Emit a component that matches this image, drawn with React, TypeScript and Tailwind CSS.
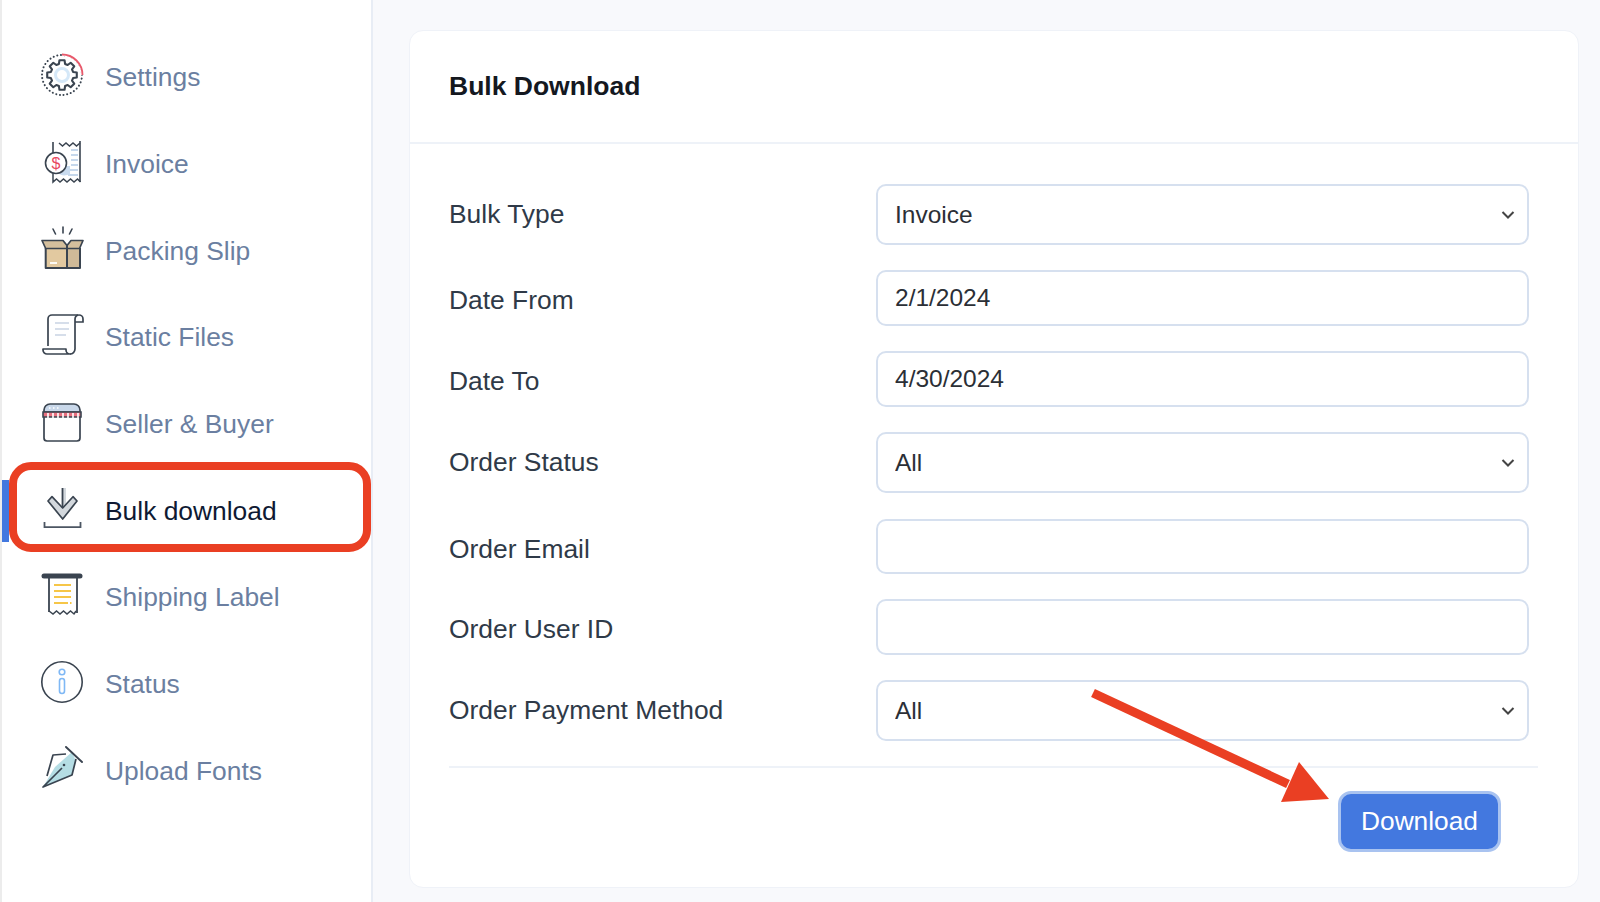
import React from "react";

const DARK = "#3a4450";

// gear outline, 8 teeth
const gearPath = (cx: number, cy: number, outer: number, inner: number) => {
  const pts: string[] = [];
  for (let i = 0; i < 8; i++) {
    const a = (i * Math.PI) / 4 - Math.PI / 2;
    const offs: [number, number][] = [
      [-0.27, inner],
      [-0.17, outer],
      [0.17, outer],
      [0.27, inner],
    ];
    offs.forEach(([d, r]) => {
      pts.push(`${(cx + r * Math.cos(a + d)).toFixed(2)} ${(cy + r * Math.sin(a + d)).toFixed(2)}`);
    });
  }
  return `M${pts.join("L")}Z`;
};

const SettingsIcon = () => (
  <svg width="44" height="44" viewBox="0 0 44 44" fill="none">
    <circle cx="22" cy="22" r="20" stroke={DARK} strokeWidth="2" strokeDasharray="0.1 3.6" strokeLinecap="round" />
    <circle cx="22" cy="22" r="20.5" stroke="#fff" strokeWidth="3" strokeDasharray="32.2 128.8" transform="rotate(-90 22 22)" />
    <path d="M22 1.5A20.5 20.5 0 0 1 42.5 22" stroke="#e8596b" strokeWidth="1.8" fill="none" />
    <path d={gearPath(22, 22, 15, 11.5)} stroke={DARK} strokeWidth="2.1" fill="#fff" strokeLinejoin="round" />
    <circle cx="22" cy="22" r="6.5" fill="#fff" stroke="#d5e8f8" strokeWidth="3" />
  </svg>
);

const InvoiceIcon = () => (
  <svg width="44" height="44" viewBox="0 0 44 44" fill="none">
    <path d="M31 10h7M31 15h7M31 20h7M31 25h7M26 30h12M28 35h10" stroke="#b4cbe6" strokeWidth="1.3" />
    <path d="M18 33c3 3 8 3 12 1v-8H18z" fill="#c9dbef" />
    <path d="M13 13V2M40 1v41" stroke={DARK} strokeWidth="1.6" />
    <path d="M19 3l3.5 3 3.5-3 3.5 3 3.5-3 3.5 3 3.5-3" stroke={DARK} strokeWidth="1.5" />
    <path d="M13 32v10l3.5-3 3.5 3 3.5-3 3.5 3 3.5-3 3.5 3 3.5-3 3 3" stroke={DARK} strokeWidth="1.5" />
    <circle cx="16" cy="23" r="10.5" fill="#fff" stroke={DARK} strokeWidth="1.6" />
    <text x="16" y="29" textAnchor="middle" fontFamily="'Liberation Sans', sans-serif" fontSize="16" fill="#e8485f">$</text>
  </svg>
);

const BoxIcon = () => (
  <svg width="44" height="44" viewBox="0 0 44 44" fill="none">
    <path d="M23 1v6M13 3l2.500 5M32 3l-2.500 5" stroke={DARK} strokeWidth="1.6" strokeLinecap="round" />
    <path d="M6 20h21v22H6z" fill="#e2c9a0" />
    <path d="M27 20h13v22H27z" fill="#cfba98" />
    <path d="M2 14.500H23l4 5 4-5h12l-3.500 8H5.700z" fill="#d4bf9d" stroke={DARK} strokeWidth="1.7" strokeLinejoin="round" />
    <path d="M5.700 22v20H40V22M27 19v23" stroke={DARK} strokeWidth="2" strokeLinejoin="round" />
    <path d="M10 37h7" stroke="#fff" strokeWidth="1.8" />
  </svg>
);

const FilesIcon = () => (
  <svg width="44" height="44" viewBox="0 0 44 44" fill="none">
    <path d="M8 33V6a4 4 0 0 1 4-4h26" stroke={DARK} strokeWidth="1.7" />
    <path d="M35 6a4 4 0 0 1 8 0v3h-8" stroke={DARK} strokeWidth="1.7" />
    <path d="M35 6v30a5 5 0 0 1-5 5" stroke={DARK} strokeWidth="1.7" />
    <path d="M3 36h23v1a4 4 0 0 0 4 4H7a4 4 0 0 1-4-4z" fill="#fff" stroke={DARK} strokeWidth="1.7" strokeLinejoin="round" />
    <path d="M15 10h14M15 16h14M15 22h11" stroke="#c9d4e3" strokeWidth="1.5" />
  </svg>
);

const SellerIcon = () => (
  <svg width="44" height="44" viewBox="0 0 44 44" fill="none">
    <path d="M4 16v22a3 3 0 0 0 3 3h30a3 3 0 0 0 3-3V16" stroke={DARK} strokeWidth="1.7" />
    <path d="M4 10a6 6 0 0 1 6-6h24a6 6 0 0 1 6 6v2H4z" fill="#c9d8ea" stroke={DARK} strokeWidth="1.7" />
    <path d="M3 12h38v5H3z" fill="#e8707f" stroke={DARK} strokeWidth="1.6" />
    <path d="M8 13v5M13 13v5M18 13v5M23 13v5M28 13v5M33 13v5M38 13v5" stroke="#fff" strokeWidth="1.6" />
    <path d="M9 8h1.5M13 8h1.5M17 8h1.5" stroke="#fff" strokeWidth="1.4" />
  </svg>
);

const DownloadIcon = () => (
  <svg width="44" height="44" viewBox="0 0 44 44" fill="none">
    <path d="M23 2h3v20h-3z" fill="#d3d8dd" />
    <path d="M8 15l4-4.300L22.700 22 33 10.700l4 4.300-14.300 18z" fill="#d3d8dd" stroke={DARK} strokeWidth="1.700" strokeLinejoin="round" />
    <path d="M22.500 2v20" stroke={DARK} strokeWidth="1.800" />
    <path d="M4.500 36v5.200h36V36" stroke="#4c5663" strokeWidth="1.800" />
  </svg>
);

const ShippingIcon = () => (
  <svg width="44" height="44" viewBox="0 0 44 44" fill="none">
    <path d="M9 3v36M37 3v37" stroke={DARK} strokeWidth="1.8" />
    <path d="M4 3h36" stroke={DARK} strokeWidth="5" strokeLinecap="round" />
    <path d="M14 12h17M14 18h17M14 24h17M14 30h14M30 30h1.500" stroke="#f6c648" strokeWidth="1.9" />
    <path d="M9 38l4 3 3.500-3 3.500 3 3.500-3 3.500 3 3.500-3 3.500 3 2-3" stroke={DARK} strokeWidth="1.5" />
  </svg>
);

const StatusIcon = () => (
  <svg width="44" height="44" viewBox="0 0 44 44" fill="none">
    <circle cx="22" cy="22" r="20.200" stroke={DARK} strokeWidth="1.6" />
    <circle cx="22" cy="12" r="2.800" stroke="#7fb8f5" strokeWidth="1.6" />
    <rect x="19.500" y="18.500" width="5" height="15" rx="2.500" stroke="#7fb8f5" strokeWidth="1.6" />
  </svg>
);

const PenIcon = () => (
  <svg width="44" height="44" viewBox="0 0 44 44" fill="none">
    <path d="M3 41l12-20 17-15 4 9-4 14z" fill="#b5dde4" />
    <path d="M7 30L13 9l13-1" stroke={DARK} strokeWidth="1.7" strokeLinejoin="round" />
    <path d="M26 1l16 15" stroke={DARK} strokeWidth="1.900" strokeLinecap="round" />
    <path d="M36 13l-4 16-29 12 19-19" stroke={DARK} strokeWidth="1.7" strokeLinejoin="round" />
    <circle cx="24" cy="19" r="1.300" fill={DARK} />
  </svg>
);

const navItems = [
  { label: "Settings", icon: <SettingsIcon /> },
  { label: "Invoice", icon: <InvoiceIcon /> },
  { label: "Packing Slip", icon: <BoxIcon /> },
  { label: "Static Files", icon: <FilesIcon /> },
  { label: "Seller & Buyer", icon: <SellerIcon /> },
  { label: "Bulk download", icon: <DownloadIcon />, active: true },
  { label: "Shipping Label", icon: <ShippingIcon /> },
  { label: "Status", icon: <StatusIcon /> },
  { label: "Upload Fonts", icon: <PenIcon /> },
];

const Label = ({ children }: { children: React.ReactNode }) => (
  <label className="h-[55px] w-[427px] shrink-0 text-[26.4px] leading-[60px] text-[#2f3a48]">{children}</label>
);

const SelectRow = ({ label, value, options }: { label: string; value: string; options: string[] }) => (
  <div className="flex items-start">
    <Label>{label}</Label>
    <div className="relative w-[653px]">
      <select
        defaultValue={value}
        className="h-[61px] w-full appearance-none rounded-[10px] border-2 border-[#d6e0ef] bg-white pl-[17px] pt-[2px] text-[24.5px] text-[#2b2f36] outline-none"
      >
        {options.map((o) => (
          <option key={o}>{o}</option>
        ))}
      </select>
      <svg className="absolute right-[14px] top-[26px]" width="14" height="10" viewBox="0 0 14 10" fill="none">
        <path d="M1.500 2l5.500 5.500L12.500 2" stroke="#444" strokeWidth="2" />
      </svg>
    </div>
  </div>
);

const InputRow = ({ label, value }: { label: string; value?: string }) => (
  <div className="flex items-start">
    <Label>{label}</Label>
    <input
      type="text"
      defaultValue={value}
      className="h-[55.5px] w-[653px] rounded-[10px] border-2 border-[#d6e0ef] bg-white pb-[1px] pl-[17px] text-[24.5px] text-[#2b2f36] outline-none"
    />
  </div>
);

export default function App() {
  return (
    <div className="relative flex h-[902px] w-[1600px] overflow-hidden bg-[#f8f9fc] font-['Liberation_Sans',Arial,sans-serif]">
      {/* Sidebar */}
      <aside className="h-full w-[373px] shrink-0 border-r-2 border-l-2 border-r-[#e8edf5] border-l-[#ececec] bg-white pt-[34.6px]">
        {navItems.map((item) => (
          <div key={item.label} className="relative flex h-[86.7px] items-center pl-[38px]">
            {item.active && <div className="absolute left-0 top-[12px] h-[62px] w-[7px] bg-[#4378df]" />}
            <span className="-mt-[6px] shrink-0">{item.icon}</span>
            <span className={`ml-[21px] text-[26.4px] ${item.active ? "text-[#0f1a33]" : "text-[#6b7fa1]"}`}>{item.label}</span>
          </div>
        ))}
      </aside>

      {/* Main */}
      <main className="flex-1 pl-[36px] pt-[30px]">
        <div className="h-[858px] w-[1170px] rounded-[14px] border border-[#eff2f8] bg-white">
          <div className="flex h-[113px] items-center border-b-2 border-[#eef2f8] px-[39px]">
            <h1 className="text-[26.5px] font-bold text-[#14181f]">Bulk Download</h1>
          </div>
          <div className="pl-[39px] pr-[40px] pt-[40px]">
            <div className="flex flex-col gap-[25.4px]">
              <SelectRow label="Bulk Type" value="Invoice" options={["Invoice", "Packing Slip"]} />
              <InputRow label="Date From" value="2/1/2024" />
              <InputRow label="Date To" value="4/30/2024" />
              <SelectRow label="Order Status" value="All" options={["All"]} />
              <InputRow label="Order Email" />
              <InputRow label="Order User ID" />
              <SelectRow label="Order Payment Method" value="All" options={["All"]} />
            </div>
            <div className="mt-[25px] border-t-2 border-[#eef2f8]" />
            <div className="flex justify-end pr-[37px] pt-[23px]">
              <button className="flex h-[61px] w-[163px] items-center justify-center rounded-[13px] border-[3.5px] border-[#a9c3f0] bg-[#4378df] text-[26.3px] text-white">
                Download
              </button>
            </div>
          </div>
        </div>
      </main>

      {/* Annotations */}
      <div className="absolute left-[9px] top-[462px] h-[90px] w-[362px] rounded-[22px] border-[8px] border-[#ea3f23]" />
      <svg className="absolute left-0 top-0" width="1600" height="902" fill="none">
        <path d="M1093 693L1288 784" stroke="#ea3f23" strokeWidth="9" />
        <polygon points="1299,762 1329,799 1281,802" fill="#ea3f23" />
      </svg>
    </div>
  );
}
